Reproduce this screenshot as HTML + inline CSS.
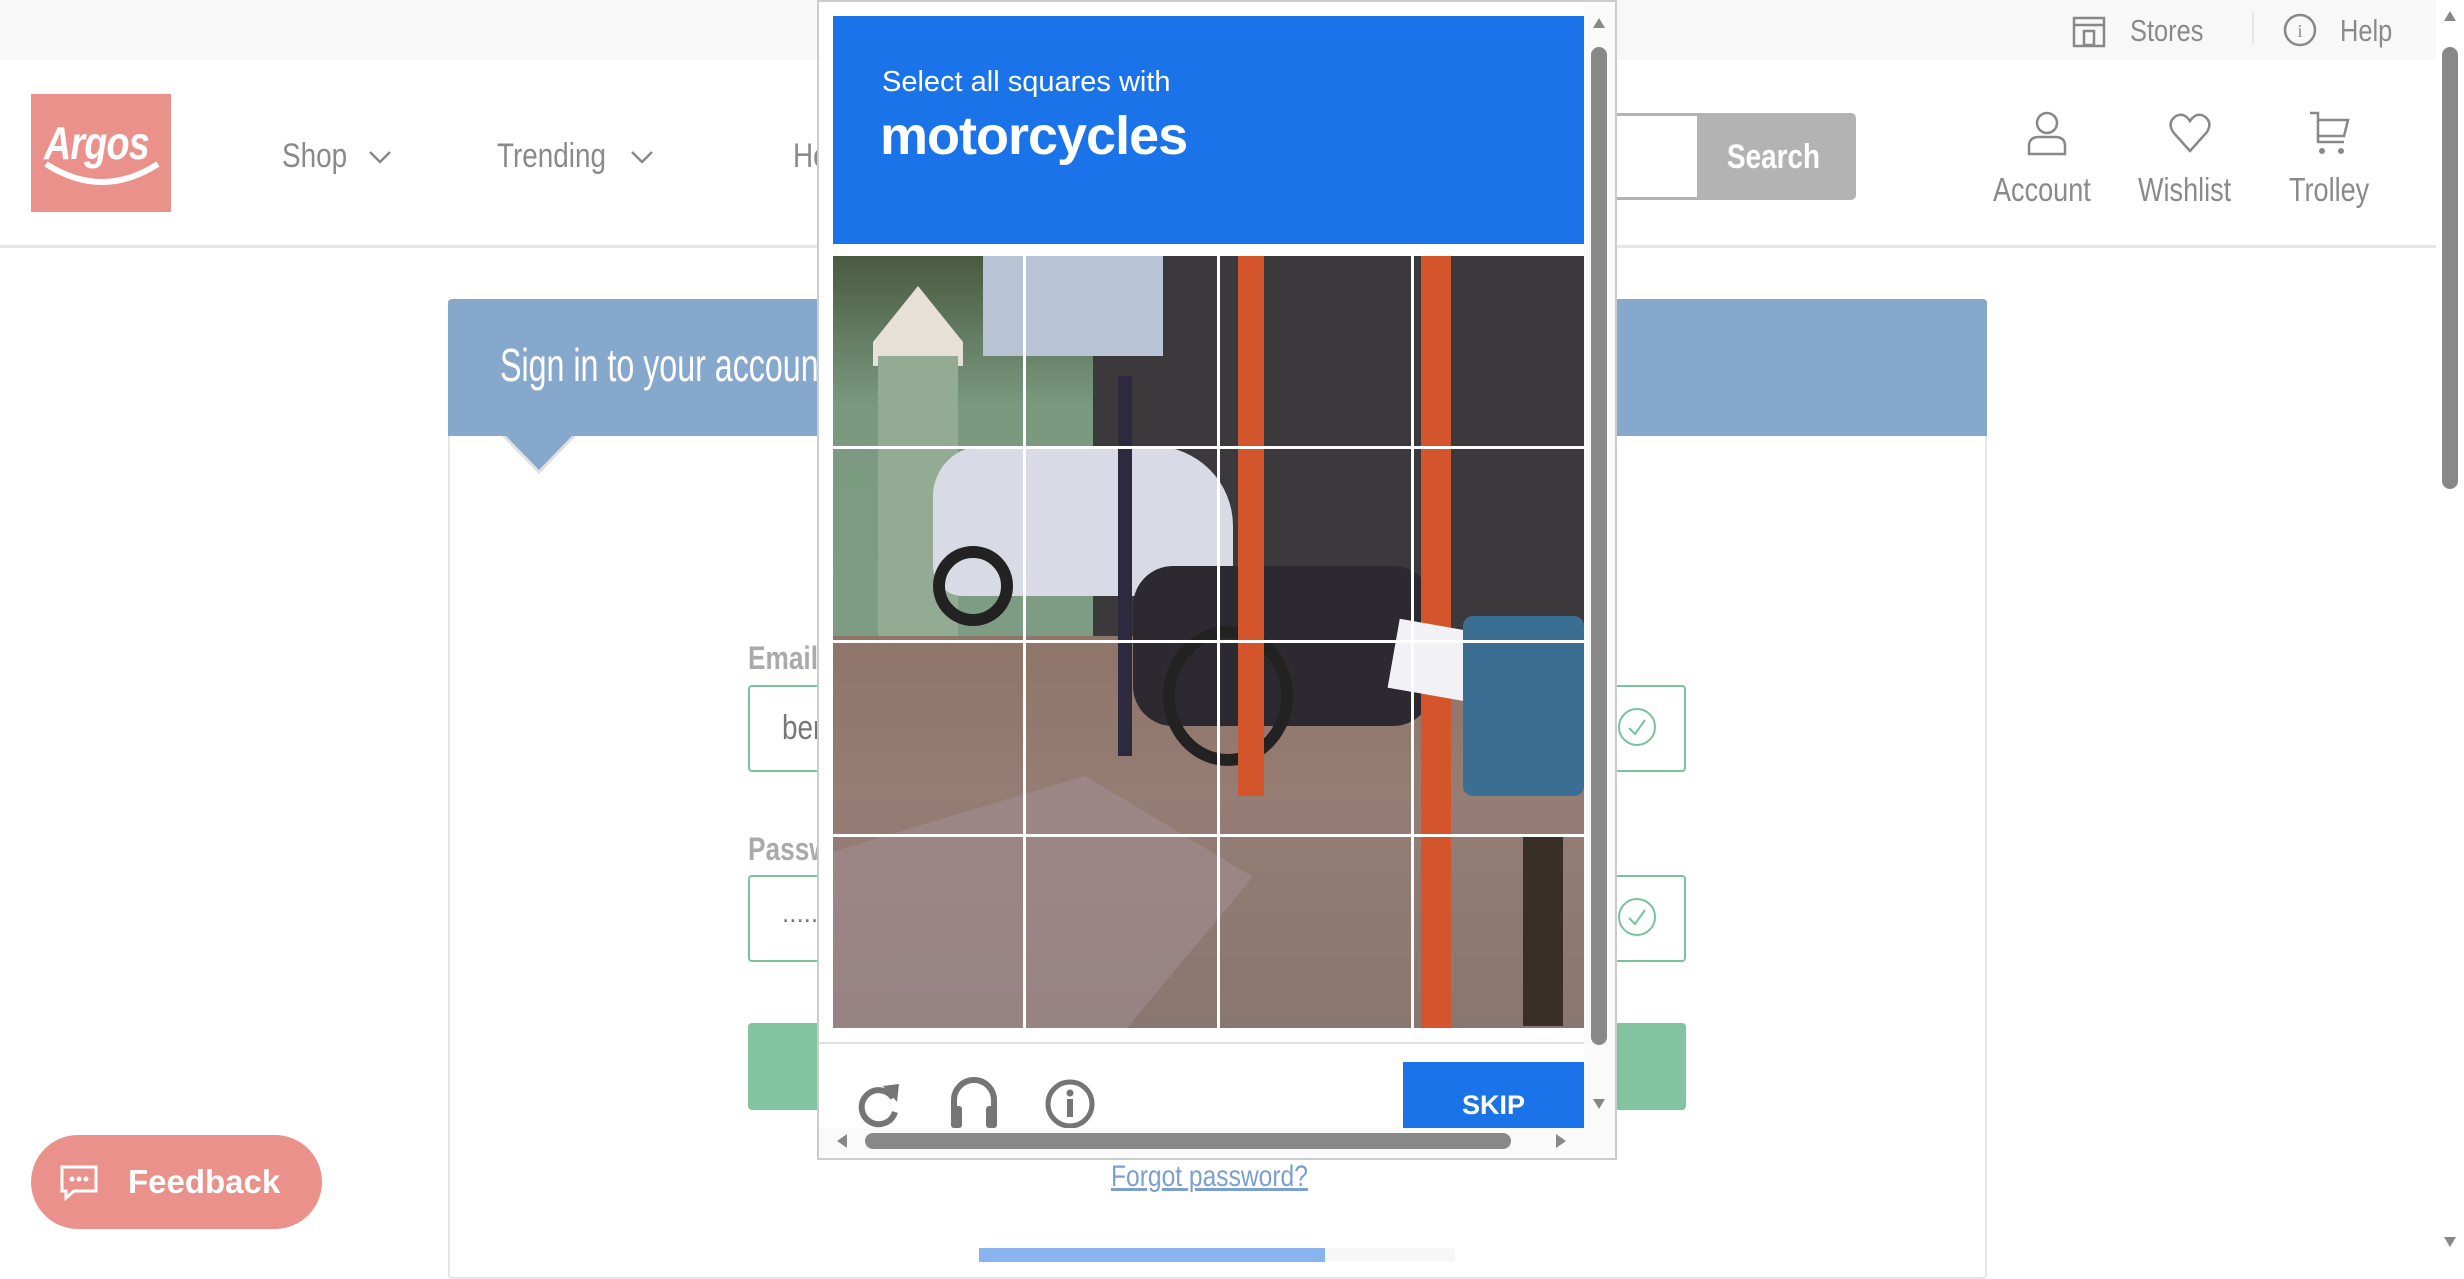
<!DOCTYPE html>
<html><head><meta charset="utf-8"><style>
*{margin:0;padding:0;box-sizing:border-box}
html,body{width:2464px;height:1262px;overflow:hidden;background:#fff;font-family:"Liberation Sans",sans-serif}
.a{position:absolute}
.g{color:#8a8a8a}
.n{transform:scaleX(.82);transform-origin:0 0;white-space:nowrap}
</style></head><body>
<div class="a" style="left:0;top:0;width:2436px;height:60px;background:#f8f8f8"></div>
<svg class="a" style="left:2072px;top:16px" width="36" height="32" viewBox="0 0 36 32"><rect x="2" y="2" width="30" height="28" fill="none" stroke="#888" stroke-width="2.5"/><line x1="2" y1="9" x2="32" y2="9" stroke="#888" stroke-width="2.5"/><rect x="12" y="15" width="10" height="14" fill="none" stroke="#888" stroke-width="2.5"/></svg>
<div class="a g n" style="left:2130px;top:13px;font-size:31px">Stores</div>
<div class="a" style="left:2252px;top:12px;width:2px;height:32px;background:#e6e6e6"></div>
<svg class="a" style="left:2282px;top:12px" width="36" height="36" viewBox="0 0 36 36"><circle cx="18" cy="18" r="15" fill="none" stroke="#888" stroke-width="2.5"/><text x="18" y="25" font-size="18" text-anchor="middle" fill="#888" font-family="Liberation Serif">i</text></svg>
<div class="a g n" style="left:2340px;top:13px;font-size:31px">Help</div>
<div class="a" style="left:0;top:245px;width:2436px;height:3px;background:#e6e6e6"></div>
<div class="a" style="left:31px;top:94px;width:140px;height:118px;background:#e9918a"></div>
<div class="a n" style="left:44px;top:116px;color:#fff;font-size:46px;font-weight:bold;font-style:italic;letter-spacing:-1px">Argos</div>
<svg class="a" style="left:40px;top:160px" width="124" height="28"><path d="M6 4 Q62 40 118 4" fill="none" stroke="#fff" stroke-width="6"/></svg>
<div class="a g n" style="left:282px;top:137px;font-size:34px">Shop</div>
<svg class="a" style="left:368px;top:150px" width="24" height="14"><path d="M2 2L12 12L22 2" fill="none" stroke="#888" stroke-width="2.5"/></svg>
<div class="a g n" style="left:497px;top:137px;font-size:34px">Trending</div>
<svg class="a" style="left:630px;top:150px" width="24" height="14"><path d="M2 2L12 12L22 2" fill="none" stroke="#888" stroke-width="2.5"/></svg>
<div class="a g n" style="left:793px;top:137px;font-size:34px">He</div>
<div class="a" style="left:1560px;top:113px;width:140px;height:87px;border:3px solid #b3b3b3;border-right:none;background:#fff"></div>
<div class="a" style="left:1697px;top:113px;width:159px;height:87px;background:#b3b3b3;border-radius:0 5px 5px 0"></div>
<div class="a n" style="left:1727px;top:138px;color:#fff;font-size:34px;font-weight:bold">Search</div>
<svg class="a" style="left:2026px;top:110px" width="42" height="46" viewBox="0 0 42 46"><circle cx="21" cy="13" r="10" fill="none" stroke="#888" stroke-width="2.5"/><path d="M3 44 V36 Q3 27 13 27 H29 Q39 27 39 36 V44 Z" fill="none" stroke="#888" stroke-width="2.5"/></svg>
<div class="a g n" style="left:1993px;top:171px;font-size:33px">Account</div>
<svg class="a" style="left:2168px;top:112px" width="44" height="42" viewBox="0 0 44 42"><path d="M22 39 L5 20 Q-1 10 8 4 Q16 0 22 9 Q28 0 36 4 Q45 10 39 20 Z" fill="none" stroke="#888" stroke-width="2.5"/></svg>
<div class="a g n" style="left:2138px;top:171px;font-size:33px">Wishlist</div>
<svg class="a" style="left:2308px;top:110px" width="44" height="46" viewBox="0 0 44 46"><path d="M2 3H10V32H36M10 10H40L36 26H10" fill="none" stroke="#888" stroke-width="2.5"/><circle cx="14" cy="41" r="3" fill="#888"/><circle cx="33" cy="41" r="3" fill="#888"/></svg>
<div class="a g n" style="left:2289px;top:171px;font-size:33px">Trolley</div>
<div class="a" style="left:2436px;top:0;width:28px;height:1262px;background:#fff"></div>
<div class="a" style="left:2442px;top:47px;width:16px;height:442px;background:#888;border-radius:8px"></div>
<svg class="a" style="left:2443px;top:10px" width="14" height="12"><path d="M7 1L13 11H1Z" fill="#888"/></svg>
<svg class="a" style="left:2443px;top:1236px" width="14" height="12"><path d="M7 11L13 1H1Z" fill="#888"/></svg>
<div class="a" style="left:448px;top:299px;width:1539px;height:980px;border:2px solid #e6e6e6;border-radius:4px"></div>
<div class="a" style="left:448px;top:299px;width:1539px;height:137px;background:#87a8cd;border-radius:4px 4px 0 0"></div>
<svg class="a" style="left:500px;top:434px" width="78" height="40"><path d="M2 0L39 38L76 0" fill="#87a8cd" stroke="#e0e0e0" stroke-width="3"/><rect x="0" y="0" width="78" height="2" fill="#87a8cd"/></svg>
<div class="a" style="left:500px;top:338px;color:#fff;font-size:46px;transform:scaleX(.7);transform-origin:0 0;white-space:nowrap">Sign in to your account</div>
<div class="a n" style="left:748px;top:640px;color:#aaa;font-size:32px;font-weight:bold">Email</div>
<div class="a" style="left:748px;top:685px;width:938px;height:87px;border:2px solid #7ac29a;border-radius:4px"></div>
<div class="a n" style="left:782px;top:709px;color:#777;font-size:34px">ben</div>
<svg class="a" style="left:1616px;top:706px" width="42" height="42"><circle cx="21" cy="21" r="18" fill="none" stroke="#7ac29a" stroke-width="2"/><path d="M13 22L19 28L29 14" fill="none" stroke="#7ac29a" stroke-width="2"/></svg>
<div class="a n" style="left:748px;top:831px;color:#aaa;font-size:32px;font-weight:bold">Password</div>
<div class="a" style="left:748px;top:875px;width:938px;height:87px;border:2px solid #7ac29a;border-radius:4px"></div>
<div class="a" style="left:782px;top:898px;color:#777;font-size:26px">......</div>
<svg class="a" style="left:1616px;top:896px" width="42" height="42"><circle cx="21" cy="21" r="18" fill="none" stroke="#7ac29a" stroke-width="2"/><path d="M13 22L19 28L29 14" fill="none" stroke="#7ac29a" stroke-width="2"/></svg>
<div class="a" style="left:748px;top:1023px;width:938px;height:87px;background:#82c49f;border-radius:4px"></div>
<div class="a n" style="left:1111px;top:1160px;color:#7b9fd0;font-size:30px;text-decoration:underline">Forgot password?</div>
<div class="a" style="left:979px;top:1248px;width:346px;height:14px;background:#8ab4f0"></div>
<div class="a" style="left:1325px;top:1248px;width:130px;height:14px;background:#f7f7f7"></div>
<div class="a" style="left:31px;top:1135px;width:291px;height:94px;background:#e9918a;border-radius:47px"></div>
<svg class="a" style="left:58px;top:1164px" width="42" height="38" viewBox="0 0 42 38"><path d="M4 3H38V27H16L8 34V27H4Z" fill="none" stroke="#fff" stroke-width="3"/><circle cx="14" cy="15" r="2.5" fill="#fff"/><circle cx="21" cy="15" r="2.5" fill="#fff"/><circle cx="28" cy="15" r="2.5" fill="#fff"/></svg>
<div class="a" style="left:128px;top:1163px;color:#fff;font-size:33px;font-weight:bold">Feedback</div>
<div class="a" style="left:817px;top:0;width:800px;height:1160px;background:#fff;border:2px solid #ccc"></div>
<div class="a" style="left:833px;top:16px;width:751px;height:228px;background:#1a73e8"></div>
<div class="a" style="left:882px;top:66px;color:#fff;font-size:29px">Select all squares with</div>
<div class="a" style="left:880px;top:105px;color:#fff;font-size:54px;font-weight:bold;letter-spacing:-1px">motorcycles</div>
<div class="a" style="left:833px;top:256px;width:751px;height:772px;overflow:hidden;background:#3b393c">
 <div class="a" style="left:0;top:0;width:260px;height:380px;background:linear-gradient(180deg,#4a5a40,#7a9a80 40%,#7e9c84)"></div>
 <div class="a" style="left:40px;top:30px;width:90px;height:80px;background:#e6e0d6;clip-path:polygon(50% 0,100% 70%,100% 100%,0 100%,0 70%)"></div>
 <div class="a" style="left:45px;top:100px;width:80px;height:290px;background:#93ab93"></div>
 <div class="a" style="left:150px;top:0;width:180px;height:100px;background:#b8c4d6"></div>
 <div class="a" style="left:0;top:380px;width:751px;height:392px;background:linear-gradient(180deg,#8f7468,#957d74 40%,#8a7670)"></div>
 <div class="a" style="left:0;top:520px;width:420px;height:252px;background:#a59098;opacity:.5;clip-path:polygon(0 30%,60% 0,100% 40%,70% 100%,0 100%)"></div>
 <div class="a" style="left:100px;top:190px;width:300px;height:150px;background:#d8dbe6;border-radius:50px 80px 30px 30px"></div>
 <div class="a" style="left:100px;top:290px;width:80px;height:80px;border:12px solid #222;border-radius:50%"></div>
 <div class="a" style="left:300px;top:310px;width:300px;height:160px;background:#2c2a30;border-radius:40px"></div>
 <div class="a" style="left:330px;top:370px;width:130px;height:140px;border:12px solid #222;border-radius:50%"></div>
 <div class="a" style="left:285px;top:120px;width:14px;height:380px;background:#2d2a40"></div>
 <div class="a" style="left:405px;top:0;width:26px;height:540px;background:#d4552c"></div>
 <div class="a" style="left:588px;top:0;width:30px;height:772px;background:#d4552c"></div>
 <div class="a" style="left:560px;top:370px;width:90px;height:70px;background:#f2f2f6;transform:rotate(10deg)"></div>
 <div class="a" style="left:630px;top:360px;width:121px;height:180px;background:#3a6e92;border-radius:10px"></div>
 <div class="a" style="left:690px;top:580px;width:40px;height:190px;background:#3a2e28"></div>
 <div class="a" style="left:190px;top:0;width:3px;height:772px;background:#fff"></div>
 <div class="a" style="left:384px;top:0;width:3px;height:772px;background:#fff"></div>
 <div class="a" style="left:578px;top:0;width:3px;height:772px;background:#fff"></div>
 <div class="a" style="left:0;top:190px;width:751px;height:3px;background:#fff"></div>
 <div class="a" style="left:0;top:384px;width:751px;height:3px;background:#fff"></div>
 <div class="a" style="left:0;top:578px;width:751px;height:3px;background:#fff"></div>
</div>
<div class="a" style="left:819px;top:1042px;width:765px;height:2px;background:#e0e0e0"></div>
<svg class="a" style="left:855px;top:1080px" width="48" height="50" viewBox="0 0 48 50"><path d="M38 18 A17 17 0 1 0 40 32" fill="none" stroke="#757575" stroke-width="6"/><path d="M28 6L44 4L42 22Z" fill="#757575"/></svg>
<svg class="a" style="left:948px;top:1074px" width="52" height="56" viewBox="0 0 52 56"><path d="M6 40V26A20 20 0 0 1 46 26V40" fill="none" stroke="#757575" stroke-width="6"/><rect x="3" y="32" width="11" height="22" rx="3" fill="#757575"/><rect x="38" y="32" width="11" height="22" rx="3" fill="#757575"/></svg>
<svg class="a" style="left:1044px;top:1078px" width="52" height="52" viewBox="0 0 52 52"><circle cx="26" cy="26" r="22" fill="none" stroke="#757575" stroke-width="5"/><circle cx="26" cy="15" r="3.5" fill="#757575"/><rect x="23" y="21" width="6" height="18" fill="#757575"/></svg>
<div class="a" style="left:1403px;top:1062px;width:181px;height:66px;background:#1a73e8;color:#fff;font-size:27px;font-weight:bold;text-align:center;line-height:86px;overflow:hidden">SKIP</div>
<div class="a" style="left:1584px;top:2px;width:31px;height:1128px;background:#fafafa"></div>
<div class="a" style="left:1591px;top:47px;width:16px;height:998px;background:#888;border-radius:8px"></div>
<svg class="a" style="left:1592px;top:17px" width="14" height="12"><path d="M7 1L13 11H1Z" fill="#888"/></svg>
<svg class="a" style="left:1592px;top:1098px" width="14" height="12"><path d="M7 11L13 1H1Z" fill="#888"/></svg>
<div class="a" style="left:819px;top:1128px;width:796px;height:30px;background:#fafafa"></div>
<div class="a" style="left:865px;top:1133px;width:646px;height:16px;background:#888;border-radius:8px"></div>
<svg class="a" style="left:836px;top:1133px" width="12" height="16"><path d="M1 8L11 1V15Z" fill="#888"/></svg>
<svg class="a" style="left:1555px;top:1133px" width="12" height="16"><path d="M11 8L1 1V15Z" fill="#888"/></svg>
</body></html>
